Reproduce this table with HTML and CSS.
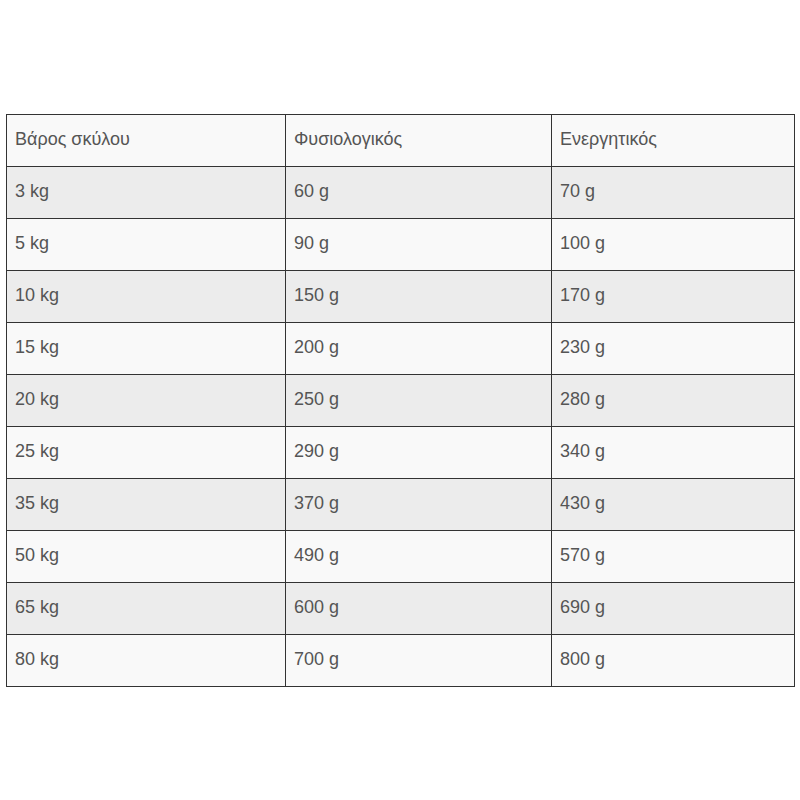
FILE: index.html
```html
<!DOCTYPE html>
<html lang="el">
<head>
<meta charset="utf-8">
<link rel="stylesheet" href="styles.css">
</head>
<body>
<div class="page">
<table class="feed">
<colgroup><col class="c1"><col class="c2"><col class="c3"></colgroup>
<tr><td>Βάρος σκύλου</td><td>Φυσιολογικός</td><td>Ενεργητικός</td></tr>
<tr><td>3 kg</td><td>60 g</td><td>70 g</td></tr>
<tr><td>5 kg</td><td>90 g</td><td>100 g</td></tr>
<tr><td>10 kg</td><td>150 g</td><td>170 g</td></tr>
<tr><td>15 kg</td><td>200 g</td><td>230 g</td></tr>
<tr><td>20 kg</td><td>250 g</td><td>280 g</td></tr>
<tr><td>25 kg</td><td>290 g</td><td>340 g</td></tr>
<tr><td>35 kg</td><td>370 g</td><td>430 g</td></tr>
<tr><td>50 kg</td><td>490 g</td><td>570 g</td></tr>
<tr><td>65 kg</td><td>600 g</td><td>690 g</td></tr>
<tr><td>80 kg</td><td>700 g</td><td>800 g</td></tr>
</table>
</div>
</body>
</html>
```
FILE: styles.css
```css
html, body { margin: 0; padding: 0; background: #fff; }
.page { padding: 114px 6px 0 6px; }
.feed {
  width: 788px;
  border-collapse: collapse;
  table-layout: fixed;
  font-family: "Liberation Sans", Arial, sans-serif;
  font-size: 18px;
  color: #555;
}
.c1 { width: 279px; }
.c2 { width: 266px; }
.c3 { width: 243px; }
.feed td {
  height: 52px;
  box-sizing: border-box;
  padding: 0 8px 2px 8px;
  border: 1px solid #333;
  vertical-align: middle;
  background: #f9f9f9;
}
.feed tr:nth-child(even) td { background: #ececec; }
```
